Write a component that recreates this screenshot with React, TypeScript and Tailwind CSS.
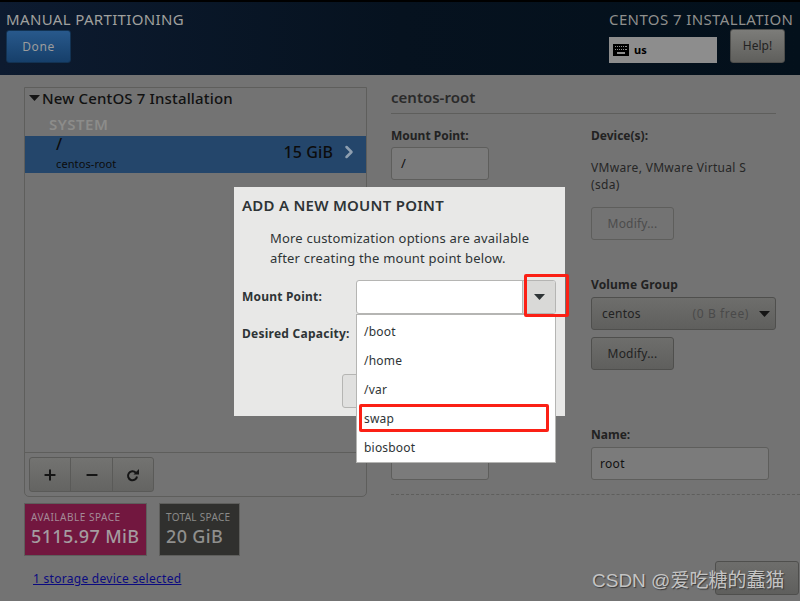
import { Plus, Minus, ChevronRight } from "lucide-react"

const font = "font-['Noto_Sans','Open_Sans',sans-serif]"

function Caret({ className }: { className: string }) {
  return (
    <svg width="11" height="6" viewBox="0 0 11 6" className={className}>
      <path d="M0 0h11L5.500 6z" fill="currentColor" />
    </svg>
  )
}

function RefreshIcon() {
  return (
    <svg width="14" height="14" viewBox="0 0 14 14" className="text-[#151515]">
      <path d="M9.800 4.700A4.500 4.500 0 1 0 11 8.500" fill="none" stroke="currentColor" strokeWidth="2" />
      <path d="M7.500 6.500L13 1v5.500z" fill="currentColor" />
    </svg>
  )
}

function KeyboardIcon() {
  return (
    <svg width="16" height="12" viewBox="0 0 16 12" className="shrink-0">
      <rect width="16" height="12" fill="#000" />
      <g fill="#8d8d8d">
        <rect x="2" y="2" width="1" height="1" />
        <rect x="4" y="2" width="1" height="1" />
        <rect x="6" y="2" width="1" height="1" />
        <rect x="8" y="2" width="1" height="1" />
        <rect x="10" y="2" width="1" height="1" />
        <rect x="12" y="2" width="2" height="1" />
        <rect x="2" y="5" width="1" height="1" />
        <rect x="4" y="5" width="1" height="1" />
        <rect x="6" y="5" width="1" height="1" />
        <rect x="8" y="5" width="1" height="1" />
        <rect x="10" y="5" width="1" height="1" />
        <rect x="12" y="5" width="2" height="1" />
        <rect x="4" y="8" width="8" height="2" />
      </g>
    </svg>
  )
}

function Header() {
  return (
    <header className="h-[75px] shrink-0 border-t-2 border-black bg-gradient-to-r from-[#0d1b30] via-[#06121f] to-[#03101b] flex justify-between pl-1.5 pr-[7px] pt-[8px]">
      <div>
        <h1 className="text-[15px] leading-[18px] text-[#a0a09e] tracking-[0.35px]">MANUAL PARTITIONING</h1>
        <button className="mt-[2px] w-[65px] h-[33px] rounded-[3px] border border-[#123252] bg-gradient-to-b from-[#28598c] to-[#163f6a] text-[12px] text-[#9c9c9c] tracking-[0.6px]">
          Done
        </button>
      </div>
      <div className="w-[184px]">
        <div className="text-[15px] leading-[18px] text-[#8f8f8d] tracking-[0.4px] whitespace-nowrap">CENTOS 7 INSTALLATION</div>
        <div className="flex">
          <div className="mt-[9px] w-[108px] h-[26px] bg-[#8d8d8d] flex items-center gap-[5px] pl-1 text-[11px] font-bold text-black">
            <KeyboardIcon />
            us
          </div>
          <button className="mt-[1px] w-[55px] h-[34px] rounded-[3px] border border-[#4d4d4b] bg-gradient-to-b from-[#7c7c79] to-[#5f5f5c] text-[12px] text-[#222] ml-[13px] shrink-0">
            Help!
          </button>
        </div>
      </div>
    </header>
  )
}

function PartitionList() {
  return (
    <div className="w-[343px]">
      <div className="h-[410px] border border-[#5e5e5c] rounded-b-[5px] flex flex-col">
        <div className="h-[22px] flex items-center pl-1 gap-[3px] text-[15px] font-medium text-[#111] -mt-[1px]">
          <Caret className="text-[#151515]" />
          <span className="-ml-[1px] tracking-[0.15px]">New CentOS 7 Installation</span>
        </div>
        <div className="pl-[24px] mt-[6px] h-[21px] text-[15px] leading-[19px] font-semibold tracking-[0.5px] text-[#8c8c8a]">SYSTEM</div>
        <div className="h-[37px] bg-[#24466b] flex justify-between items-center pl-[31px] pr-[11px] text-[#0c0c0c]">
          <div>
            <div className="text-[16px] leading-[16px] font-medium -mt-[2px]">/</div>
            <div className="text-[11px] leading-[14px] mt-[5px] tracking-[0.1px]">centos-root</div>
          </div>
          <div className="flex items-center gap-[6px] text-[16px] font-medium tracking-[0.1px] -mt-[6px]">
            15 GiB
            <ChevronRight size={20} strokeWidth={3} className="text-[#8f9fb0] -mr-[4px]" />
          </div>
        </div>
        <div className="mt-auto border-t border-[#5e5e5c] h-[44px] px-1 pt-1">
          <div className="w-[125px] h-[35px] border border-[#5a5a58] rounded-[3px] flex bg-gradient-to-b from-[#737371] to-[#646462]">
            <div className="w-[41px] border-r border-[#5a5a58] flex items-center justify-center">
              <Plus size={16} strokeWidth={3} className="text-[#151515]" />
            </div>
            <div className="w-[42px] border-r border-[#5a5a58] flex items-center justify-center">
              <Minus size={16} strokeWidth={3} className="text-[#151515]" />
            </div>
            <div className="flex-1 flex items-center justify-center">
              <RefreshIcon />
            </div>
          </div>
        </div>
      </div>
      <div className="flex gap-3 mt-[6px]">
        <div className="w-[123px] h-[53px] bg-[#72173f] border border-[#5e5e5c] pl-[6px] pt-[5px]">
          <div className="text-[10px] leading-[16px] text-[#a48a97] tracking-[0.5px]">AVAILABLE SPACE</div>
          <div className="text-[18px] leading-[23px] font-medium text-[#a49ca0] tracking-[0.35px] whitespace-nowrap">5115.97 MiB</div>
        </div>
        <div className="w-[81px] h-[53px] bg-[#30302e] border border-[#5e5e5c] pl-[6px] pt-[5px]">
          <div className="text-[10px] leading-[16px] text-[#8a8a88] tracking-[0.3px] whitespace-nowrap">TOTAL SPACE</div>
          <div className="text-[18px] leading-[23px] font-medium text-[#8f8f8d] tracking-[0.35px]">20 GiB</div>
        </div>
      </div>
      <a className="block mt-[14px] ml-[9px] w-fit text-[12px] leading-[17px] text-[#0b0b80] underline tracking-[0.28px]">1 storage device selected</a>
    </div>
  )
}

function Details() {
  return (
    <div className="w-[409px] ml-[24px] relative">
      <div className="w-[385px] h-[27px] pt-[1px] border-b border-[#5e5e5c] text-[15px] leading-[18px] font-semibold text-[#2a2a2a]">centos-root</div>
      <div className="flex">
        <div className="w-[200px] shrink-0">
          <div className="mt-[14px] text-[12px] leading-[16px] font-bold text-[#222]">Mount Point:</div>
          <div className="mt-[3px] w-[98px] h-[33px] border border-[#5e5e5c] rounded-[3px] bg-[#7b7b7b] pl-[9px] text-[13px] leading-[31px] text-[#111]">/</div>
          <div className="mt-[267px] w-[98px] h-[33px] border border-[#5e5e5c] rounded-[3px] bg-[#7b7b7b]" />
        </div>
        <div className="flex-1">
          <div className="mt-[14px] text-[12px] leading-[16px] font-bold text-[#222]">Device(s):</div>
          <div className="mt-[15px] text-[12px] leading-[17px] text-[#262626] tracking-[0.32px]">VMware, VMware Virtual S<br />(sda)</div>
          <button className="block mt-[14px] w-[83px] h-[33px] border border-[#5e5e5c] rounded-[3px] text-[12px] text-[#4c4c4c] tracking-[0.2px]">Modify...</button>
          <div className="mt-[37px] text-[12px] leading-[16px] font-bold text-[#222] tracking-[0.15px]">Volume Group</div>
          <div className="mt-[4px] w-[185px] h-[33px] border border-[#4f4f4d] rounded-[3px] bg-gradient-to-b from-[#6e6e6c] to-[#5f5f5d] flex items-center pl-[10px] pr-[5px] text-[12px] text-[#222] tracking-[0.25px]">
            <span>centos</span>
            <span className="ml-auto text-[#4a4a4a] tracking-[0.6px]">(0 B free)</span>
            <Caret className="ml-[10px] text-[#151515]" />
          </div>
          <button className="block mt-[7px] w-[83px] h-[33px] border border-[#4f4f4d] rounded-[3px] bg-gradient-to-b from-[#6e6e6c] to-[#5f5f5d] text-[12px] text-[#222] tracking-[0.2px]">Modify...</button>
          <div className="mt-[57px] text-[12px] leading-[16px] font-bold text-[#222]">Name:</div>
          <div className="mt-[4px] w-[178px] h-[33px] border border-[#5e5e5c] rounded-[3px] bg-[#7b7b7b] pl-[8px] text-[12px] leading-[31px] text-[#111] tracking-[0.3px]">root</div>
        </div>
      </div>
      <div className="mt-[14px] border-t border-dashed border-[#5e5e5c]" />
      <button className="mt-[66px] ml-[324px] block w-[84px] h-[34px] border border-[#4f4f4d] rounded-[3px] bg-gradient-to-b from-[#6e6e6c] to-[#5f5f5d]" />
    </div>
  )
}

function MountDialog() {
  return (
    <div className="absolute left-[234px] top-[187px] w-[331px] h-[229px] bg-[#e8e8e7] text-[#2e3436]">
      <h2 className="absolute left-2 top-[8px] text-[15px] leading-[20px] font-semibold tracking-[0.25px] whitespace-nowrap">ADD A NEW MOUNT POINT</h2>
      <p className="absolute left-[36px] top-[41px] text-[13px] leading-[20px] tracking-[0.2px] whitespace-nowrap">
        More customization options are available<br />after creating the mount point below.
      </p>
      <div className="absolute left-2 top-[102px] text-[12px] leading-[16px] font-bold tracking-[0.2px]">Mount Point:</div>
      <div className="absolute left-2 top-[139px] text-[12px] leading-[16px] font-bold tracking-[0.25px]">Desired Capacity:</div>
      <div className="absolute left-[108px] top-[187px] w-[60px] h-[34px] border border-[#b5b5b3] rounded-[3px] bg-[#e0e0df]" />
      <div className="absolute left-[122px] top-[93px] w-[200px] h-[34px] border border-[#b5b5b3] rounded-[3px] bg-white flex justify-end overflow-hidden">
        <div className="w-[33px] bg-[#d9d9d7] border-l border-[#b5b5b3] flex items-center justify-center">
          <Caret className="text-[#2e3436]" />
        </div>
      </div>
      <ul className="absolute left-[122px] top-[127px] w-[200px] h-[149px] border border-[#b5b5b3] bg-white pt-[2px] text-[12px] text-[#2e3436] tracking-[0.2px]">
        {["/boot", "/home", "/var", "swap", "biosboot"].map((item) => (
          <li key={item} className="h-[29px] pl-[7px] leading-[29px]">{item}</li>
        ))}
      </ul>
    </div>
  )
}

export default function App() {
  return (
    <div className={`relative w-[800px] h-[601px] overflow-hidden bg-[#737373] flex flex-col ${font}`}>
      <Header />
      <main className="flex pl-6 pt-3">
        <PartitionList />
        <Details />
      </main>
      <MountDialog />
      {/* annotations on top of the screenshot */}
      <div className="absolute left-[524px] top-[274px] w-[45px] h-[43px] border-[3px] border-[#fb2015] rounded-[2px]" />
      <div className="absolute left-[359px] top-[404px] w-[190px] h-[28px] border-[3px] border-[#fb2015] rounded-[2px]" />
      <div className="absolute left-[592px] top-[569px] text-[19px] leading-[24px] text-[#c4c4c4] [text-shadow:1px_1px_1px_#3a3a3a] whitespace-nowrap font-['Liberation_Sans','Noto_Sans_CJK_SC',sans-serif]">CSDN @爱吃糖的蠢猫</div>
    </div>
  )
}
